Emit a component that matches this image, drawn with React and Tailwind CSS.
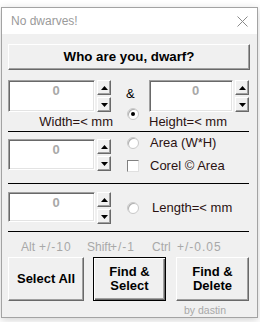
import React from 'react';

const labelColor = 'text-[#2b1212]';

function SpinBtn({ up }) {
  return (
    <div className="w-[14px] h-[15px] bg-[#f0f0f0] border border-t-white border-l-white border-r-[#696969] border-b-[#696969] shadow-[inset_-1px_-1px_0_#a0a0a0] flex items-center justify-center">
      <svg width="7" height="4" viewBox="0 0 7 4">
        {up ? <path d="M3.5 0L7 4H0Z" fill="#000" /> : <path d="M0 0H7L3.5 4Z" fill="#000" />}
      </svg>
    </div>
  );
}

function Spin({ box }) {
  return (
    <div className="flex gap-[2px]">
      <div className={`${box} bg-white border border-t-[#a0a0a0] border-l-[#a0a0a0] border-b-white border-r-white shadow-[inset_1px_1px_0_#696969,inset_-1px_-1px_0_#e3e3e3] text-center pl-[9px] pt-[3px] text-[13px] font-bold text-[#a8a8a8] leading-[14px]`}>
        0
      </div>
      <div className="flex flex-col gap-[2px]">
        <SpinBtn up />
        <SpinBtn />
      </div>
    </div>
  );
}

function Radio({ checked }) {
  return (
    <div className="w-[12px] h-[12px] rounded-full bg-white border border-[#c8c8c8] shadow-[inset_1px_1px_0_#b0b0b0] flex items-center justify-center">
      {checked && <div className="w-[4px] h-[4px] rounded-full bg-black" />}
    </div>
  );
}

function Btn({ w, def, children }) {
  return (
    <div
      className={`${w} h-[44px] flex items-center justify-center text-center text-[13px] font-bold leading-[14px] text-black bg-[#f0f0f0] border ${
        def
          ? 'border-black shadow-[inset_1px_1px_0_#fff,inset_-1px_-1px_0_#696969,inset_-2px_-2px_0_#a0a0a0]'
          : 'border-t-white border-l-white border-b-[#696969] border-r-[#696969] shadow-[inset_-1px_-1px_0_#a0a0a0]'
      }`}
    >
      {children}
    </div>
  );
}

export default function App() {
  return (
    <div className="w-[260px] h-[322px] bg-white pt-[7px] pl-px font-['Liberation_Sans',Arial,sans-serif]">
      <div className="w-[257px] h-[311px] border border-[#a3a3a3] bg-[#f0f0f0] shadow-[0_2px_8px_rgba(0,0,0,0.18)] flex flex-col">
        <div className="h-[30px] bg-white flex items-center justify-between pl-[9px] pr-[9px]">
          <span className="text-[12px] text-[#9a9a9a]">No dwarves!</span>
          <svg width="11" height="11" viewBox="0 0 11 11">
            <path d="M0.5 0.5L10.5 10.5M10.5 0.5L0.5 10.5" stroke="#8a8a8a" strokeWidth="1" />
          </svg>
        </div>

        <div className="flex flex-col pl-[6px] pr-[7px]">
          <div className="mt-[10px] h-[26px] flex items-center justify-center text-[13.3px] font-bold text-black bg-[#f0f0f0] border border-t-white border-l-white border-b-[#696969] border-r-[#696969] shadow-[inset_-1px_-1px_0_#a0a0a0]">
            Who are you, dwarf?
          </div>

          {/* width & height */}
          <div className="mt-[10px] flex">
            <div className="w-[105px] flex flex-col">
              <Spin box="w-[87px] h-[32px]" />
              <div className={`mt-[3px] h-[14px] leading-[14px] text-right text-[13px] ${labelColor}`}>Width=&lt; mm</div>
            </div>
            <div className="ml-[13px] flex">
              <div className="w-[23px] flex flex-col">
                <div className="mt-[7px] h-[14px] leading-[14px] text-[13px] text-black">&amp;</div>
                <div className="mt-[7px] ml-px">
                  <Radio checked />
                </div>
              </div>
              <div className="flex flex-col">
                <Spin box="w-[84px] h-[32px]" />
                <div className={`mt-[3px] h-[14px] leading-[14px] text-[13px] ${labelColor}`}>Height=&lt; mm</div>
              </div>
            </div>
          </div>
          <div className="mt-[2px] h-px w-[241px] bg-black" />

          {/* area */}
          <div className="mt-[4px] flex">
            <div className="w-[105px] mt-[3px]">
              <Spin box="w-[87px] h-[31px]" />
            </div>
            <div className="ml-[14px] flex flex-col">
              <div className="h-[14px] flex items-center gap-[11px]">
                <Radio />
                <span className={`text-[13px] leading-[14px] ${labelColor}`}>Area (W*H)</span>
              </div>
              <div className="mt-[9px] h-[14px] flex items-center gap-[11px]">
                <div className="w-[12px] h-[12px] bg-white border border-t-[#808080] border-l-[#808080] border-b-[#e0e0e0] border-r-[#e0e0e0]" />
                <span className={`text-[13px] leading-[14px] ${labelColor}`}>Corel © Area</span>
              </div>
            </div>
          </div>
          <div className="mt-[10px] h-px w-[241px] bg-black" />

          {/* length */}
          <div className="mt-[8px] flex items-center">
            <div className="w-[105px]">
              <Spin box="w-[87px] h-[30px]" />
            </div>
            <div className="ml-[14px] flex items-center gap-[13px]">
              <Radio />
              <span className={`text-[13px] leading-[14px] ${labelColor}`}>Length=&lt; mm</span>
            </div>
          </div>
          <div className="mt-[7px] h-px w-[241px] bg-black" />

          <div className="mt-[8px] h-[14px] leading-[14px] pl-[13px] flex text-[12px] text-[#a8a8a8]">
            <span className="w-[18px] shrink-0">Alt</span>
            <span className="w-[48px] shrink-0 tracking-[1px]">+/-10</span>
            <span className="w-[23px] shrink-0">Shift</span>
            <span className="w-[42px] shrink-0 tracking-[1px]">+/-1</span>
            <span className="w-[25px] shrink-0">Ctrl</span>
            <span className="tracking-[1px]">+/-0.05</span>
          </div>

          <div className="mt-[3px] flex">
            <Btn w="w-[76px]">Select All</Btn>
            <div className="ml-[9px]">
              <Btn w="w-[73px]" def>
                Find &amp;
                <br />
                Select
              </Btn>
            </div>
            <div className="ml-[10px]">
              <Btn w="w-[73px]">
                Find &amp;
                <br />
                Delete
              </Btn>
            </div>
          </div>

          <div className="mt-[3px] h-[13px] leading-[13px] ml-[176px] text-[10.5px] text-[#a8a8a8]">by dastin</div>
        </div>
      </div>
    </div>
  );
}
